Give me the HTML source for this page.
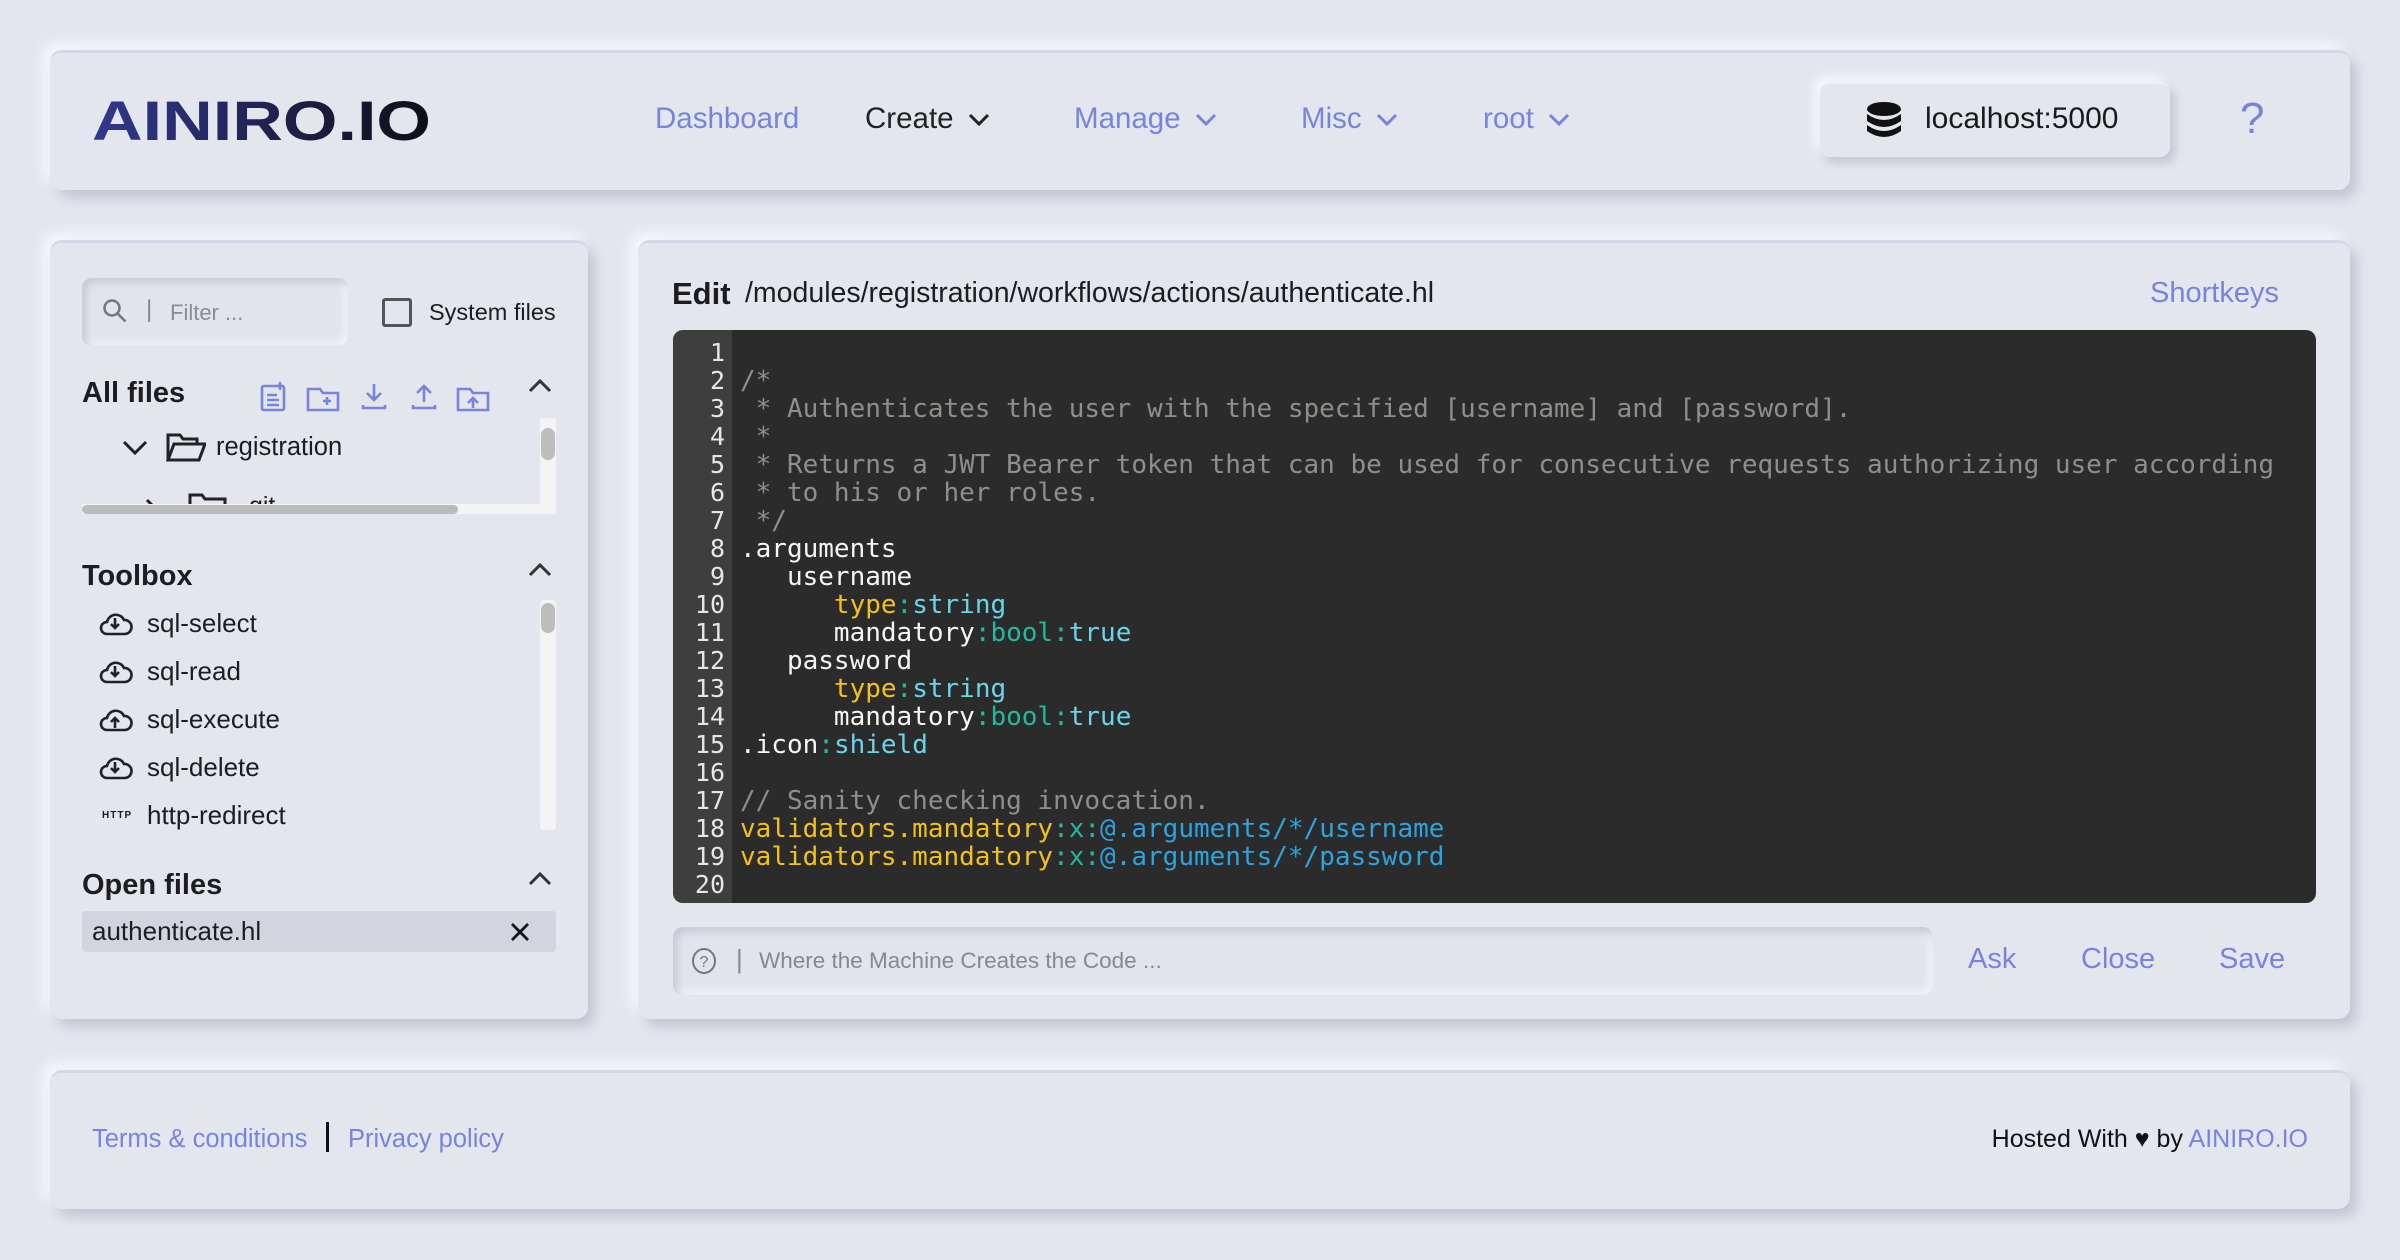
<!DOCTYPE html>
<html><head><meta charset="utf-8">
<style>
*{box-sizing:border-box;margin:0;padding:0}
body{width:2400px;height:1260px;background:#e4e6ee;font-family:"Liberation Sans",sans-serif;position:relative;overflow:hidden;color:#1d1d1f}
.card{position:absolute;background:#e4e6ee;border-radius:12px;border-top:3px solid #d3d7e6;box-shadow:7px 8px 12px #c3c6d1,-7px -7px 12px #f6f7fa}
.a{position:absolute;white-space:nowrap}
.link{color:#7784dd}
.nav{font-size:29.5px;top:102px}
.chev{display:inline-block;vertical-align:middle;margin-left:14px}
.code{position:absolute;left:673px;top:330px;width:1643px;height:573px;background:#2b2b2b;border-radius:10px;overflow:hidden}
.gut{position:absolute;left:0;top:0;width:59px;height:100%;background:#3e3e3e}
pre{font-family:"DejaVu Sans Mono","Liberation Mono",monospace;font-size:26px;line-height:28px;position:absolute;top:9px;color:#f6f6f2}
.ln{left:0;width:52px;text-align:right;color:#e6e6e6;font-size:25px}
.src{left:67px}
.c{color:#8f8f8a}.y{color:#f3c11b}.t{color:#22b9a2}.s{color:#6ad4e8}.b{color:#2da3df}
h3{position:absolute;font-size:29px;font-weight:bold;color:#1d1d1f}
.tb{font-size:26px;left:147px}
</style></head><body>

<div class="card" style="left:50px;top:50px;width:2300px;height:140px"></div>
<svg class="a" style="left:90px;top:96px" width="345" height="50"><defs><linearGradient id="g" x1="0" x2="1"><stop offset="0" stop-color="#33388f"/><stop offset="1" stop-color="#0e0e14"/></linearGradient></defs><text x="2" y="44" font-family="Liberation Sans" font-weight="bold" font-size="56" fill="url(#g)" textLength="339" lengthAdjust="spacingAndGlyphs">AINIRO.IO</text></svg>
<div class="a nav link" style="left:655px">Dashboard</div>
<div class="a nav" style="left:865px;color:#222">Create<svg class="chev" width="22" height="14"><path d="M2 2l9 9 9-9" stroke="#222" stroke-width="3" fill="none"/></svg></div>
<div class="a nav link" style="left:1074px">Manage<svg class="chev" width="22" height="14"><path d="M2 2l9 9 9-9" stroke="#7784dd" stroke-width="3" fill="none"/></svg></div>
<div class="a nav link" style="left:1301px">Misc<svg class="chev" width="22" height="14"><path d="M2 2l9 9 9-9" stroke="#7784dd" stroke-width="3" fill="none"/></svg></div>
<div class="a nav link" style="left:1483px">root<svg class="chev" width="22" height="14"><path d="M2 2l9 9 9-9" stroke="#7784dd" stroke-width="3" fill="none"/></svg></div>
<div class="card" style="left:1820px;top:82px;width:350px;height:75px;border-radius:10px;border-top:2px solid #eef0f5;box-shadow:5px 6px 10px #c3c6d1,-5px -5px 10px #f8f9fb"></div>
<svg class="a" style="left:1866px;top:102px" width="36" height="36"><ellipse cx="18" cy="7" rx="17" ry="7" fill="#111"/><path d="M1 12q17 12 34 0v7q-17 12-34 0z" fill="#111"/><path d="M1 23q17 12 34 0v6q-17 12-34 0z" fill="#111"/></svg>
<div class="a" style="left:1925px;top:102px;font-size:30px;color:#1a1a1a">localhost:5000</div>
<div class="a link" style="left:2240px;top:94px;font-size:44px">?</div>

<div class="card" style="left:50px;top:240px;width:538px;height:779px"></div>
<div class="a" style="left:82px;top:278px;width:266px;height:68px;border-radius:10px;background:#e2e4ec;box-shadow:inset 4px 4px 8px #c6c9d3,inset -4px -4px 8px #f3f4f8"></div>
<svg class="a" style="left:102px;top:298px" width="26" height="26"><circle cx="10" cy="10" r="7.5" stroke="#777" stroke-width="2.5" fill="none"/><path d="M15.5 15.5l8 8" stroke="#777" stroke-width="2.5"/></svg>
<div class="a" style="left:146px;top:296px;font-size:24px;color:#888">|</div>
<div class="a" style="left:170px;top:300px;font-size:22px;color:#8c8c8c">Filter ...</div>
<div class="a" style="left:382px;top:298px;width:30px;height:29px;border:3px solid #555;border-radius:3px"></div>
<div class="a" style="left:429px;top:299px;font-size:23.5px">System files</div>
<h3 style="left:82px;top:377px">All files</h3>
<svg class="a" style="left:258px;top:380px" width="240" height="34" fill="none" stroke="#7784dd" stroke-width="2.6">
<rect x="4" y="6" width="22" height="24" rx="2"/><path d="M9 15h10M9 20h12M9 25h12M22 2v8M18 6h8"/>
<path d="M50 9h12l3 4h15v17h-30z"/><path d="M65 21h8M69 17v8"/>
<path d="M116 4v16M109 13l7 7 7-7M105 25v3h22v-3"/>
<path d="M166 22V6M159 13l7-7 7 7M155 25v3h22v-3"/>
<path d="M200 9h12l3 4h15v17h-30z"/><path d="M215 28v-9M210 23l5-5 5 5"/>
</svg>
<svg class="a" style="left:528px;top:378px" width="24" height="16"><path d="M2 13l10-10 10 10" stroke="#333" stroke-width="3" fill="none"/></svg>
<div class="a" style="left:82px;top:418px;width:474px;height:96px;overflow:hidden">
 <svg class="a" style="left:40px;top:22px" width="26" height="16"><path d="M2 2l11 11 11-11" stroke="#222" stroke-width="3" fill="none"/></svg>
 <svg class="a" style="left:84px;top:14px" width="40" height="32" fill="none" stroke="#222" stroke-width="3"><path d="M2 28V3h12l3 4h14v5"/><path d="M2 28l6-16h31l-6 16z"/></svg>
 <div class="a" style="left:134px;top:15px;font-size:25.5px">registration</div>
 <svg class="a" style="left:62px;top:80px" width="20" height="20"><path d="M3 2l10 10" stroke="#222" stroke-width="3"/></svg>
 <svg class="a" style="left:106px;top:74px" width="40" height="30" fill="none" stroke="#222" stroke-width="3"><path d="M2 28V3h12l3 4h20v21"/></svg>
 <div class="a" style="left:160px;top:74px;font-size:25px">.git</div>
 <div class="a" style="left:458px;top:0;width:16px;height:96px;background:#f4f4f6"></div>
 <div class="a" style="left:459px;top:10px;width:14px;height:32px;border-radius:7px;background:#bdbdbd"></div>
 <div class="a" style="left:0;top:86px;width:474px;height:10px;background:#f4f4f6"></div>
 <div class="a" style="left:0;top:87px;width:376px;height:9px;border-radius:5px;background:#bbb"></div>
</div>
<h3 style="left:82px;top:560px">Toolbox</h3>
<svg class="a" style="left:528px;top:562px" width="24" height="16"><path d="M2 13l10-10 10 10" stroke="#333" stroke-width="3" fill="none"/></svg>
<div class="a" style="left:540px;top:600px;width:16px;height:230px;background:#f4f4f6;border-radius:4px"></div>
<div class="a" style="left:541px;top:603px;width:14px;height:30px;border-radius:7px;background:#bdbdbd"></div>
<svg class="a" style="left:99px;top:610px" width="34" height="220" fill="none" stroke="#222" stroke-width="2.6">
<g id="cl"><path d="M8 24a6 6 0 0 1 0-12a9 9 0 0 1 17-2a7 7 0 0 1 1 14z"/><path d="M16 8v10M12 14l4 4 4-4"/></g>
<use href="#cl" y="48"/>
<g transform="translate(0,96)"><path d="M8 24a6 6 0 0 1 0-12a9 9 0 0 1 17-2a7 7 0 0 1 1 14z"/><path d="M16 22v-10M12 16l4-4 4 4"/></g>
<use href="#cl" y="144"/>
</svg>
<div class="a" style="left:102px;top:810px;font-size:10px;font-weight:bold;letter-spacing:1px">HTTP</div>
<div class="a tb" style="top:608px">sql-select</div>
<div class="a tb" style="top:656px">sql-read</div>
<div class="a tb" style="top:704px">sql-execute</div>
<div class="a tb" style="top:752px">sql-delete</div>
<div class="a tb" style="top:800px">http-redirect</div>
<h3 style="left:82px;top:869px">Open files</h3>
<svg class="a" style="left:528px;top:871px" width="24" height="16"><path d="M2 13l10-10 10 10" stroke="#333" stroke-width="3" fill="none"/></svg>
<div class="a" style="left:82px;top:911px;width:474px;height:41px;background:#d3d5de;border-radius:4px"></div>
<div class="a" style="left:92px;top:916px;font-size:26px">authenticate.hl</div>
<svg class="a" style="left:510px;top:922px" width="20" height="20"><path d="M2 2l16 16M18 2L2 18" stroke="#111" stroke-width="2.8"/></svg>

<div class="card" style="left:638px;top:240px;width:1712px;height:779px"></div>
<div class="a" style="left:672px;top:276px;font-size:31px;font-weight:bold">Edit</div>
<div class="a" style="left:745px;top:277px;font-size:28.5px">/modules/registration/workflows/actions/authenticate.hl</div>
<div class="a link" style="left:2150px;top:277px;font-size:29px">Shortkeys</div>
<div class="code"><div class="gut"></div>
<pre class="ln">1
2
3
4
5
6
7
8
9
10
11
12
13
14
15
16
17
18
19
20</pre>
<pre class="src">

<span class="c">/*
 * Authenticates the user with the specified [username] and [password].
 *
 * Returns a JWT Bearer token that can be used for consecutive requests authorizing user according
 * to his or her roles.
 */</span>
.arguments
   username
      <span class="y">type</span><span class="t">:</span><span class="s">string</span>
      mandatory<span class="t">:bool:</span><span class="s">true</span>
   password
      <span class="y">type</span><span class="t">:</span><span class="s">string</span>
      mandatory<span class="t">:bool:</span><span class="s">true</span>
.icon<span class="t">:</span><span class="s">shield</span>

<span class="c">// Sanity checking invocation.</span>
<span class="y">validators.mandatory</span><span class="t">:x:</span><span class="b">@.arguments/*/username</span>
<span class="y">validators.mandatory</span><span class="t">:x:</span><span class="b">@.arguments/*/password</span>
</pre></div>
<div class="a" style="left:673px;top:927px;width:1260px;height:68px;border-radius:10px;background:#e2e4ec;box-shadow:inset 4px 5px 8px #c6c9d3,inset -4px -4px 8px #f3f4f8"></div>
<svg class="a" style="left:690px;top:946px" width="28" height="30"><ellipse cx="14" cy="15" rx="11" ry="12" stroke="#777" stroke-width="2" fill="none"/><text x="14" y="21" font-size="16" text-anchor="middle" fill="#777" font-family="Liberation Sans">?</text></svg>
<div class="a" style="left:736px;top:944px;font-size:26px;color:#888">|</div>
<div class="a" style="left:759px;top:948px;font-size:22.5px;color:#888">Where the Machine Creates the Code ...</div>
<div class="a link" style="left:1968px;top:943px;font-size:29px">Ask</div>
<div class="a link" style="left:2081px;top:943px;font-size:29px">Close</div>
<div class="a link" style="left:2219px;top:943px;font-size:29px">Save</div>

<div class="card" style="left:50px;top:1070px;width:2300px;height:139px"></div>
<div class="a link" style="left:92px;top:1125px;font-size:25.5px">Terms &amp; conditions</div>
<div class="a" style="left:326px;top:1122px;width:3px;height:30px;background:#111"></div>
<div class="a link" style="left:348px;top:1125px;font-size:25.5px">Privacy policy</div>
<div class="a" style="right:92px;top:1125px;font-size:25px;color:#111">Hosted With ♥ by <span class="link">AINIRO.IO</span></div>
</body></html>
